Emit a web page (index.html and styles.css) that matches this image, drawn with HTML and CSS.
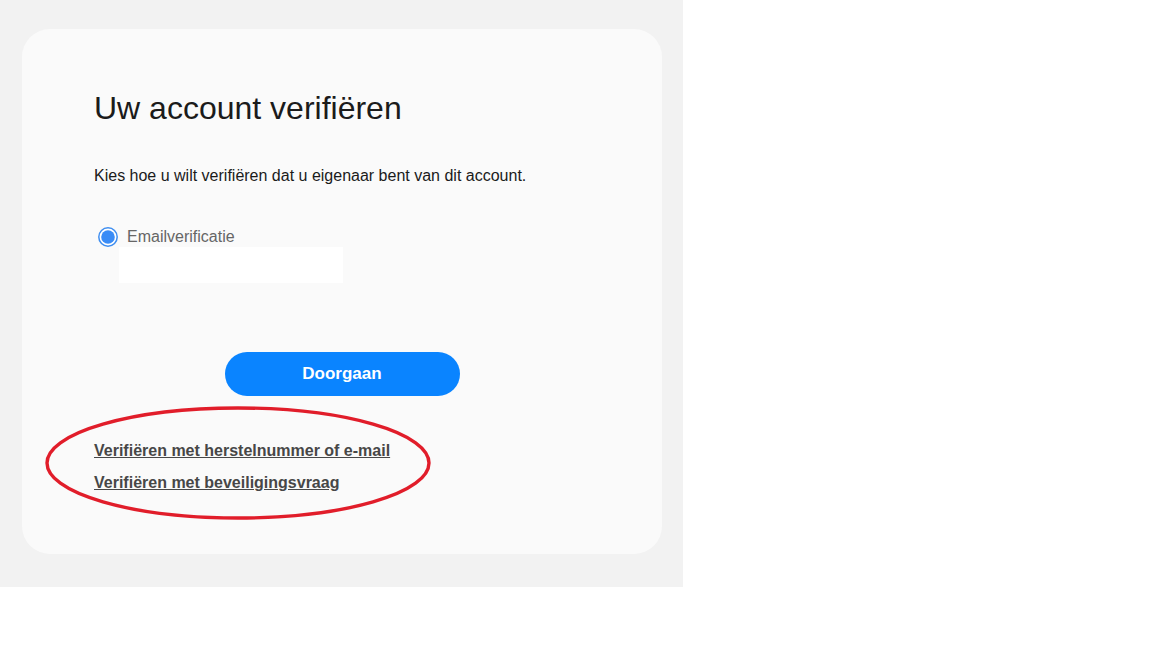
FILE: index.html
```html
<!DOCTYPE html>
<html lang="nl">
<head>
<meta charset="utf-8">
<title>Uw account verifiëren</title>
<link rel="stylesheet" href="styles.css">
</head>
<body>
<div class="page">
  <div class="card">
    <h1 class="title">Uw account verifiëren</h1>
    <p class="lead">Kies hoe u wilt verifiëren dat u eigenaar bent van dit account.</p>
    <label class="option">
      <svg class="radio" width="20" height="20" viewBox="0 0 20 20" aria-hidden="true">
        <circle cx="10" cy="10" r="9.2" fill="#ffffff" stroke="#3f8ef0" stroke-width="1.5"/>
        <circle cx="10" cy="10" r="6.8" fill="#3a8cf6"/>
      </svg>
      <span class="option-label">Emailverificatie</span>
    </label>
    <div class="masked"></div>
    <div class="actions">
      <button class="primary" type="button">Doorgaan</button>
    </div>
    <div class="links">
      <a class="alt-link" href="#">Verifiëren met herstelnummer of e-mail</a>
      <a class="alt-link" href="#">Verifiëren met beveiligingsvraag</a>
    </div>
  </div>
</div>
<svg class="annotation" width="400" height="130" viewBox="0 0 400 130" aria-hidden="true">
  <ellipse cx="199" cy="65" rx="191" ry="55" fill="none" stroke="#e11d2a" stroke-width="3.4"/>
</svg>
</body>
</html>
```

FILE: styles.css
```css
html, body {
  margin: 0;
  padding: 0;
  background: #ffffff;
}

body {
  font-family: Arial, "Liberation Sans", Helvetica, sans-serif;
  position: relative;
  width: 1152px;
  height: 648px;
  overflow: hidden;
}

.page {
  width: 683px;
  height: 587px;
  box-sizing: border-box;
  background: #f2f2f2;
  padding: 29px 21px 33px 22px;
}

.card {
  height: 525px;
  box-sizing: border-box;
  background: #fafafa;
  border-radius: 28px;
  padding: 59px 72px 0 72px;
  display: flex;
  flex-direction: column;
}

.title {
  margin: 0;
  font-size: 32px;
  line-height: 40px;
  font-weight: 400;
  color: #1b1b1b;
}

.lead {
  margin: 38px 0 0 0;
  font-size: 16px;
  line-height: 20px;
  color: #1b1b1b;
}

.option {
  margin: 41px 0 0 4px;
  display: flex;
  align-items: center;
  gap: 9px;
  height: 20px;
}

.radio {
  display: block;
  flex: none;
}

.option-label {
  font-size: 16px;
  line-height: 20px;
  color: #666666;
}

.masked {
  margin: 0 0 0 25px;
  width: 224px;
  height: 36px;
  background: #ffffff;
}

.actions {
  margin-top: 69px;
  display: flex;
  justify-content: center;
}

.primary {
  width: 235px;
  height: 44px;
  border: none;
  border-radius: 22px;
  background: #0a84ff;
  color: #ffffff;
  font-family: Arial, "Liberation Sans", Helvetica, sans-serif;
  font-size: 17px;
  font-weight: 700;
  cursor: pointer;
  padding: 0;
}

.links {
  margin-top: 45px;
  display: flex;
  flex-direction: column;
  align-items: flex-start;
  gap: 12px;
}

.alt-link {
  font-size: 16px;
  line-height: 20px;
  font-weight: 700;
  color: #474747;
  text-decoration: underline;
}

.annotation {
  position: absolute;
  left: 39px;
  top: 398px;
}
```
